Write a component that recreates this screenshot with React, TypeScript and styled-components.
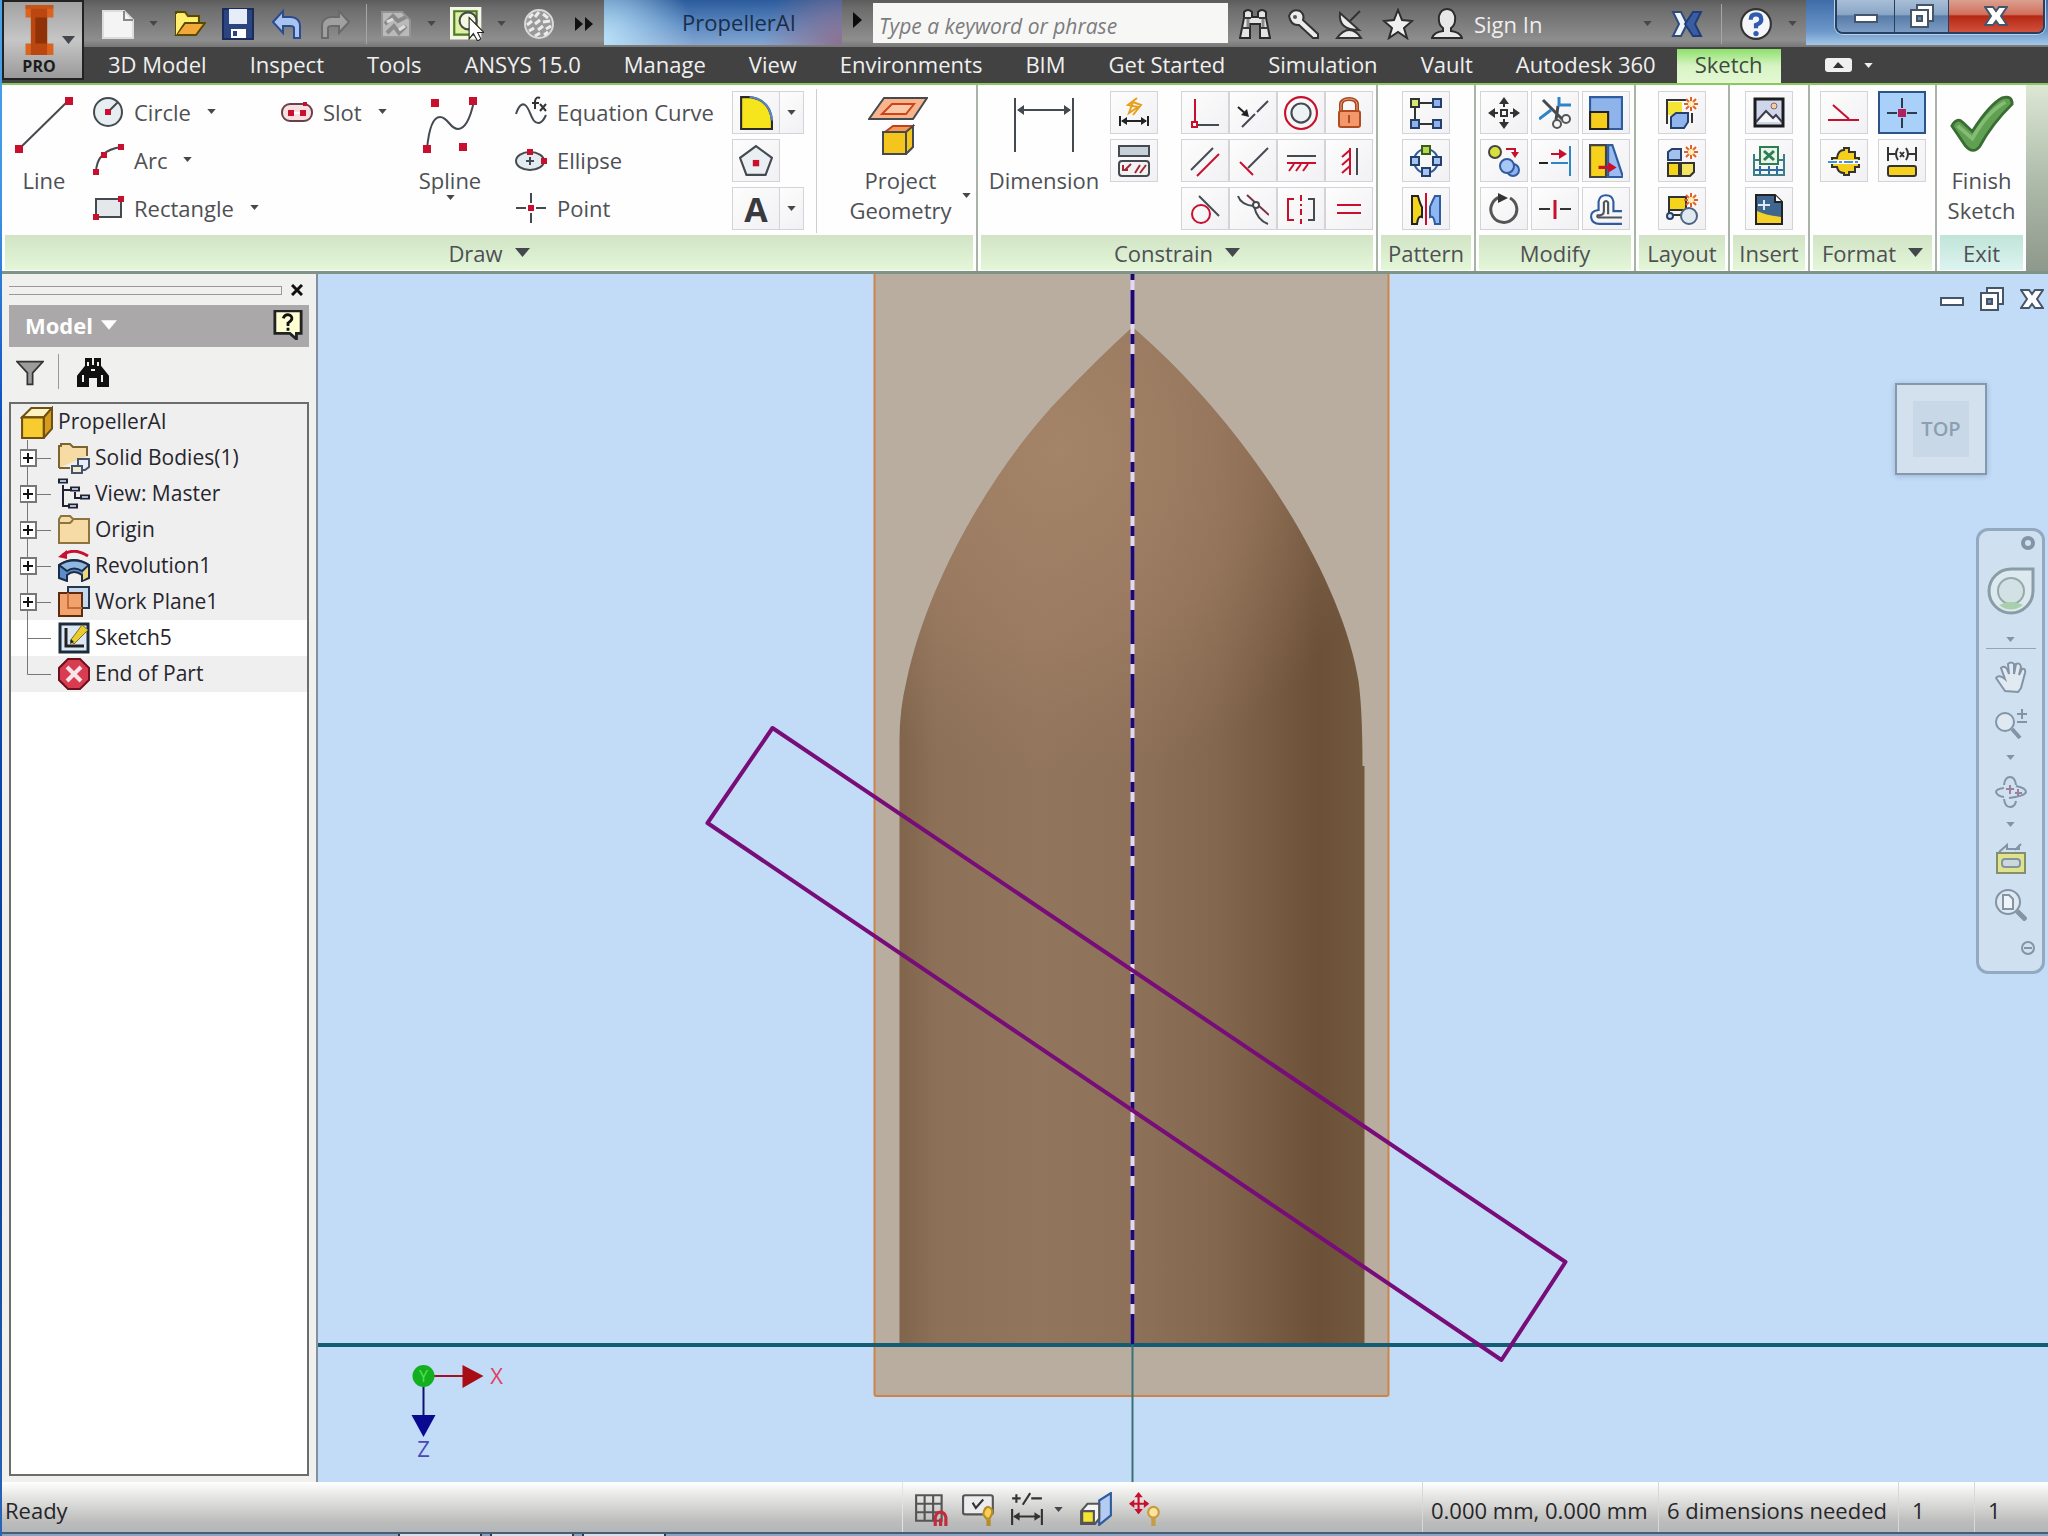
import React from "react";
import styled, { createGlobalStyle, css } from "styled-components";

const RED = "#c8102e";
const INK = "#444a50";
const BLUE = "#2f5c9e";

const Global = createGlobalStyle`
  * { box-sizing: border-box; }
  body { margin: 0; background: #c2dcf8; }
  body, button, input {
    font-family: "Open Sans", "Noto Sans", sans-serif;
    font-size: 22px;
    line-height: 30px;
  }
  button {
    margin: 0; padding: 0; border: 0; background: none; color: inherit; cursor: default;
  }
  svg { display: block; flex: none; }
`;

/* ---------- frame ---------- */

const Window = styled.div`
  min-height: 100vh;
  display: grid;
  grid-template-rows: auto auto 1fr auto auto;
  padding-left: 2px;
  background: linear-gradient(#4aa4ea 0, #3f95e4 200px, #0b50c0 420px, #0a3c9c 1100px, #2a66b8);
`;

const Header = styled.header`
  display: grid;
  grid-template-columns: 82px minmax(0, 1fr);
  grid-template-rows: 47px 36px;
  background: #424242;
  border-bottom: 2px solid #8cc860;
`;

const AppButton = styled.button`
  grid-row: 1 / 3;
  display: grid;
  grid-template-columns: 1fr 18px;
  align-items: center;
  margin-bottom: 3px;
  padding: 2px 2px 2px 0;
  border: 2px solid #222;
  background: linear-gradient(#a2a2a2, #c6c6c6 50%, #9a9a9a);
`;

const AppMark = styled.span`
  display: flex;
  flex-direction: column;
  align-items: center;
  padding-left: 12px;
  font-size: 16px;
  line-height: 20px;
  font-weight: 700;
  color: #1c1c1c;
`;

const TitleBar = styled.div`
  display: flex;
  min-width: 0;
  background: linear-gradient(#5c5c5c 0, #6c6c6c 8px, #8e8e8e 40px, #777);
`;

const TitleGroup = styled.div`
  display: flex;
  align-items: center;
`;

const QuickAccess = styled(TitleGroup)`
  width: 520px;
  padding-left: 16px;
`;

const BarButton = styled.button<{ $w: number }>`
  width: ${(p) => p.$w}px;
  height: 40px;
  display: flex;
  align-items: center;
  justify-content: center;
`;

const BarDivider = styled.span<{ $gap: number }>`
  width: 1px;
  height: 40px;
  margin: 0 ${(p) => p.$gap}px;
  background: #a6a6a6;
`;

const DocTitle = styled.h1`
  width: 238px;
  height: 45px;
  margin: 0;
  padding-left: 32px;
  text-align: center;
  font-size: 22px;
  line-height: 44px;
  font-weight: 400;
  color: #1c2c48;
  background:
    radial-gradient(circle at 0 90%, #b8e0f8 0, transparent 90px),
    radial-gradient(circle at 100% 100%, #8c7090 0, transparent 80px),
    linear-gradient(#2c5c9c, #5d8cc4 60%, #86a6d0);
`;

const SearchField = styled.input`
  width: 355px;
  height: 40px;
  margin-top: 3px;
  padding: 6px 6px 0;
  border: 0;
  background: #f7f7f5;
  font-size: 21px;
  font-style: italic;
  color: #333;
  &::placeholder { color: #7c7c80; opacity: 1; }
`;

const SignIn = styled.button`
  color: #eee;
`;

const Spacer = styled.span`
  flex: 1;
`;

const Glass = styled.div`
  width: 242px;
  height: 45px;
  display: flex;
  justify-content: flex-end;
  padding-right: 3px;
  background: linear-gradient(#3f6ca8, #6c98ca 70%, #a4c8e8);
`;

const WindowButtons = styled.div`
  display: grid;
  grid-template-columns: 58px 54px 94px;
  height: 34px;
  border: 2px solid #27405f;
  border-top: 0;
  border-radius: 0 0 8px 8px;
  overflow: hidden;
  box-shadow: 0 0 0 1px #b8d0e8;
`;

const WindowButton = styled.button<{ $close?: boolean }>`
  display: flex;
  align-items: center;
  justify-content: center;
  border-right: ${(p) => (p.$close ? "0" : "1px solid #27405f")};
  background: ${(p) =>
    p.$close
      ? "linear-gradient(#dca090, #d0705c 45%, #b42814 50%, #d2503c)"
      : "linear-gradient(#a8bed6, #8aa6c6 45%, #587ca8 50%, #7c9cc4)"};
`;

const Tabs = styled.nav`
  display: flex;
  padding-left: 2px;
  color: #f0f0f0;
`;

const Tab = styled.button<{ $active?: boolean }>`
  padding: 0 21px 2px 22px;
  white-space: nowrap;
  ${(p) =>
    p.$active &&
    css`
      margin-top: 2px;
      padding: 0 18px 4px;
      color: #3c4c3c;
      background: linear-gradient(#8ee06c, #d8f4c4 50%, #e4f8d4);
    `}
`;

const CollapseGroup = styled.span`
  display: flex;
  align-items: center;
  gap: 12px;
  margin-left: 44px;
`;

/* ---------- ribbon ---------- */

const Ribbon = styled.section`
  display: grid;
  grid-template-columns:
    minmax(0, 976fr) minmax(0, 400fr) minmax(0, 98fr) minmax(0, 160fr) minmax(0, 94fr)
    minmax(0, 80fr) minmax(0, 127fr) minmax(0, 89fr) minmax(0, 22fr);
  color: #4e5054;
  background: #fefefe;
  border-bottom: 3px solid #7f9486;
`;

const PanelBox = styled.section`
  border-right: 2px solid #a9b3a7;
  &:nth-of-type(8) { border-right: 0; }
`;

const RibbonEnd = styled.div`
  background: linear-gradient(#dce8d4, #a8b4a4 60%, #8e988c);
`;

const PanelBody = styled.div<{ $center?: boolean; $gap?: number }>`
  height: 150px;
  display: flex;
  align-items: flex-start;
  justify-content: ${(p) => (p.$center ? "center" : "flex-start")};
  gap: ${(p) => p.$gap ?? 0}px;
  padding-top: 6px;
`;

const PanelLabel = styled.h2<{ $exit?: boolean }>`
  display: flex;
  align-items: center;
  justify-content: center;
  gap: 12px;
  height: 35px;
  margin: 0 3px 1px;
  font-size: 22px;
  font-weight: 400;
  background: ${(p) =>
    p.$exit ? "linear-gradient(#c0e4d8, #dcf4f0)" : "linear-gradient(#d2e4c6, #e4f6d8)"};
`;

const BigButton = styled.button<{ $w: number }>`
  width: ${(p) => p.$w}px;
  display: flex;
  flex-direction: column;
  align-items: center;
  padding-top: 4px;
  line-height: 30px;
  & > svg:first-child { margin-bottom: 10px; }
`;

const BigLabel = styled.span`
  display: flex;
  align-items: center;
  gap: 10px;
  padding-left: 24px;
`;

const Column = styled.div<{ $w?: number }>`
  ${(p) => p.$w && `width: ${p.$w}px;`}
  display: flex;
  flex-direction: column;
  gap: 5px;
  flex: none;
`;

const Gap = styled.span<{ $w: number }>`
  flex: none;
  width: ${(p) => p.$w}px;
`;

const ToolButton = styled.button`
  height: 43px;
  display: flex;
  align-items: center;
  gap: 10px;
  padding: 0 0 2px 6px;
  white-space: nowrap;
  & > svg:last-child:not(:first-child) { margin-left: 6px; }
`;

const SmallButton = styled.button<{ $w?: number; $on?: boolean }>`
  width: ${(p) => p.$w ?? 48}px;
  height: 43px;
  display: flex;
  align-items: center;
  justify-content: center;
  border: ${(p) => (p.$on ? "2px solid #2c5488" : "1px solid #d3d3d8")};
  background: ${(p) => (p.$on ? "#a8d0f8" : "linear-gradient(135deg, #fdfdfd, #f1f1f4)")};
`;

const TextButton = styled(SmallButton)`
  font-size: 34px;
  line-height: 40px;
  font-weight: 700;
  color: #3a3a3e;
`;

const SplitRow = styled.div`
  display: flex;
  & > button + button { border-left: 0; }
`;

const IconGrid = styled.div<{ $cols: number; $gap?: number }>`
  display: grid;
  grid-template-columns: repeat(${(p) => p.$cols}, auto);
  gap: 5px ${(p) => p.$gap ?? 0}px;
`;

const PanelDivider = styled.span`
  width: 1px;
  height: 144px;
  margin: -2px 0 0 12px;
  background: #cfcfcf;
`;

/* ---------- workspace ---------- */

const Workspace = styled.main`
  display: grid;
  grid-template-columns: 316px minmax(0, 1fr);
`;

const Browser = styled.aside`
  display: flex;
  flex-direction: column;
  padding: 6px 7px 6px 7px;
  background: #f0f0ef;
  border-right: 2px solid #8490a0;
`;

const GripRow = styled.div`
  display: flex;
  align-items: center;
  gap: 7px;
  height: 20px;
  margin-bottom: 5px;
  padding-right: 4px;
`;

const Grip = styled.span`
  flex: 1;
  height: 9px;
  border: solid #999;
  border-width: 1px 1px 1px 0;
`;

const BrowserHead = styled.div`
  display: flex;
  align-items: center;
  justify-content: space-between;
  height: 42px;
  padding: 0 6px 2px 16px;
  background: #aaa8a8;
  color: #fff;
`;

const BrowserTitle = styled.button`
  display: flex;
  align-items: center;
  gap: 8px;
  font-weight: 700;
`;

const BrowserTools = styled.div`
  display: flex;
  align-items: center;
  height: 49px;
  margin-bottom: 6px;
  padding-left: 7px;
  gap: 14px;
`;

const ToolDivider = styled.span`
  width: 1px;
  height: 35px;
  background: #999;
  margin-right: 4px;
`;

const Tree = styled.ul`
  flex: 1;
  margin: 0;
  padding: 0;
  list-style: none;
  border: 2px solid #6c6c6c;
  background: #fff;
  font-size: 21px;
  color: #26262c;
`;

const TreeRow = styled.li<{ $edit?: boolean }>`
  display: flex;
  align-items: center;
  height: 36px;
  padding-left: 9px;
  background: ${(p) => (p.$edit ? "#fff" : "#f0eff0")};
`;

const TreeLabel = styled.button`
  font: inherit;
  padding: 0 0 2px 5px;
  white-space: nowrap;
`;

const Viewport = styled.section`
  position: relative;
  overflow: hidden;
  background: #c2dcf8;
`;

const Scene = styled.svg`
  position: absolute;
  inset: 0;
  width: 100%;
  height: 100%;
`;

const DocButtons = styled.div`
  position: absolute;
  top: 13px;
  right: 4px;
  display: flex;
  gap: 16px;
  align-items: center;
`;

const ViewCube = styled.button`
  position: absolute;
  top: 109px;
  right: 61px;
  width: 92px;
  height: 92px;
  display: flex;
  align-items: center;
  justify-content: center;
  border: 2px solid #8698ac;
  background: #d3e1ee;
  box-shadow: 0 1px 6px #9ab4d0;
`;

const CubeFace = styled.span`
  width: 56px;
  height: 56px;
  line-height: 56px;
  font-size: 20px;
  font-weight: 600;
  color: #8c9fb2;
  background: #c8d8e6;
`;

const NavBar = styled.div`
  position: absolute;
  top: 254px;
  right: 3px;
  width: 69px;
  height: 446px;
  display: flex;
  flex-direction: column;
  align-items: center;
  padding: 4px 0;
  border: 3px solid #93a9c0;
  border-radius: 12px;
  background: #cfe1f1;
`;

const NavButton = styled.button<{ $h: number; $end?: boolean }>`
  width: 100%;
  height: ${(p) => p.$h}px;
  display: flex;
  align-items: center;
  justify-content: ${(p) => (p.$end ? "flex-end" : "center")};
  padding-right: ${(p) => (p.$end ? 6 : 0)}px;
`;

const NavDivider = styled.span`
  width: 50px;
  height: 1px;
  background: #93a5b8;
`;

/* ---------- status bar ---------- */

const StatusBar = styled.footer`
  display: grid;
  grid-template-columns: minmax(0, 900fr) minmax(0, 520fr) 236px 240px 76px 74px;
  height: 50px;
  color: #26262a;
  background: linear-gradient(#fff, #e9e9e8 25%, #bcbcbb 80%, #b2b6ba);
`;

const StatusCell = styled.div`
  display: flex;
  align-items: center;
  padding: 6px 0 0 8px;
  white-space: nowrap;
  border-left: 1px solid #d8d8d8;
  &:first-child { padding-left: 3px; border-left: 0; }
  &:nth-child(n + 5) { padding-left: 13px; }
`;

const StatusTools = styled.div`
  display: flex;
  align-items: center;
  padding: 4px 0 0 4px;
  border-left: 1px solid #e4e4e4;
`;

const Taskbar = styled.div`
  display: flex;
  gap: 8px;
  height: 4px;
  padding-left: 396px;
  border-top: 2px solid #4a5c70;
  background: #86a6c8;
`;

const TaskItem = styled.span`
  width: 84px;
  background: #d4e0ec;
  border: solid #2e3a44;
  border-width: 0 2px;
`;

/* ---------- icons ---------- */

type IcoProps = { s?: number; v?: string; children: React.ReactNode };
const Ico = ({ s = 32, v = "0 0 32 32", children }: IcoProps) => (
  <svg width={s} height={s} viewBox={v} fill="none" stroke={INK} strokeWidth="2" aria-hidden="true">
    {children}
  </svg>
);

const Caret = ({ color = "#44484c", w = 9 }: { color?: string; w?: number }) => (
  <svg width={w} height={Math.round(w * 0.6)} viewBox="0 0 10 6" aria-hidden="true">
    <path d="M0 0H10L5 6Z" fill={color} />
  </svg>
);

const Dot = ({ x, y, r = 3 }: { x: number; y: number; r?: number }) => (
  <rect x={x - r} y={y - r} width={r * 2} height={r * 2} fill={RED} stroke="none" />
);

const Spark = ({ x = 25, y = 7 }: { x?: number; y?: number }) => (
  <g stroke="#e0622a" strokeWidth="2">
    <path d={`M${x} ${y - 7}V${y + 7}M${x - 7} ${y}H${x + 7}M${x - 5} ${y - 5}L${x + 5} ${y + 5}M${x + 5} ${y - 5}L${x - 5} ${y + 5}`} />
    <circle cx={x} cy={y} r="3" fill="#fff0b0" stroke="none" />
  </g>
);

const icons = {
  logo: (
    <svg width="36" height="52" viewBox="0 0 40 54" preserveAspectRatio="none" aria-hidden="true">
      <path d="M5 1H36V14H29V41H36V53H5V41H11V14H5Z" fill="#d9641f" />
      <path d="M11 1H29V53H11Z" fill="#b9470f" />
      <path d="M16 14H29V41H16Z" fill="#8f3208" />
      <path d="M5 1H36V5H5Z" fill="#c4561c" />
    </svg>
  ),
  newDoc: (
    <Ico><path d="M1 3H22L31 12V30H1Z" fill="#f4f4f4" stroke="#ddd" /><path d="M22 3V12H31" stroke="#888" /></Ico>
  ),
  open: (
    <Ico>
      <path d="M2 27V4H11L14 8H25V14" fill="#fbe36a" stroke="#5a4a00" />
      <path d="M2 27L11 15H31L22 27Z" fill="#f2a93a" stroke="#5a4a00" />
      <path d="M2 27V6H10L13 10H23V14H10Z" fill="#ffef6e" stroke="none" />
    </Ico>
  ),
  save: (
    <Ico>
      <path d="M1 1H31V31H1Z" fill="#2c4480" stroke="#1b2c5c" />
      <path d="M7 1H25V16H7Z" fill="#e6ecf8" stroke="none" />
      <path d="M9 21H24V30H9Z" fill="#fff" stroke="none" />
      <path d="M11 23H15V28H11Z" fill="#2c4480" stroke="none" />
    </Ico>
  ),
  undo: (
    <Ico>
      <path d="M2 14L12 3V9H20Q29 10 29 18V30H23V20Q23 18 19 18H12V25Z" fill="#a9c4ee" stroke="#2c4c90" />
    </Ico>
  ),
  redo: (
    <Ico><path d="M30 14L20 3V9H12Q3 10 3 18V30H9V20Q9 18 13 18H20V25Z" fill="#a0a0a0" stroke="#6a6a6a" /></Ico>
  ),
  update: (
    <Ico>
      <path d="M2 4H22L30 12V29H2Z" fill="#bababa" stroke="#949494" />
      <path d="M5 16L13 8L18 13L26 9M7 25L14 18L19 25L26 18" stroke="#8a8a8a" strokeWidth="4" />
      <path d="M7 14L13 11M19 22L25 18" stroke="#dedede" strokeWidth="3" />
    </Ico>
  ),
  select: (
    <Ico s={34}>
      <path d="M1 1H28V29H1Z" fill="#dff0a0" stroke="#f6f6e8" strokeWidth="3" />
      <path d="M4 4H25V26H4Z" stroke="#4d7a2c" />
      <circle cx="17" cy="13" r="8" fill="#f4f8e0" />
      <path d="M18 10V30L22 25L26 32L29 30L26 24H32Z" fill="#fff" stroke="#222" strokeWidth="1" />
    </Ico>
  ),
  sphere: (
    <Ico>
      <circle cx="16" cy="16" r="14" fill="#9a9a9a" stroke="#d8d8d8" />
      <path d="M6 10L10 6M12 9L16 4M20 6L25 10M4 17L9 13M12 16L17 12M20 14L27 13M6 23L11 20M15 22L20 18M23 21L28 18M12 28L17 25M21 27L25 24" stroke="#ececec" strokeWidth="3" />
    </Ico>
  ),
  more: (
    <svg width="18" height="14" viewBox="0 0 18 14" aria-hidden="true"><path d="M0 0L8 7L0 14ZM10 0L18 7L10 14Z" fill="#111" /></svg>
  ),
  arrow: (
    <svg width="9" height="16" viewBox="0 0 9 16" aria-hidden="true"><path d="M0 0L9 8L0 16Z" fill="#0c0c0c" /></svg>
  ),
  binoculars: (
    <Ico>
      <path d="M5 4Q9 0 13 4V9H19V4Q23 0 27 4V10L31 30H21V16H11V30H1L5 10Z" fill="#e4e4e4" stroke="#2a2a2a" />
      <path d="M5 10H12M20 10H27M2 20H11M21 20H30" stroke="#3a3a3a" /><path d="M9 11V19M24 11V19" stroke="#8a8a8a" strokeWidth="3" />
    </Ico>
  ),
  key: (
    <Ico>
      <path d="M2 8Q5 0 13 3Q18 7 16 12L31 26V30H26L12 17Q4 18 2 8Z" fill="#ececec" stroke="#333" />
      <circle cx="8" cy="9" r="2" fill="#555" stroke="none" />
    </Ico>
  ),
  dish: (
    <Ico>
      <path d="M6 5Q4 22 25 22Z" fill="#ececec" stroke="#333" />
      <path d="M16 13L26 3M3 30Q9 22 15 22Q22 22 27 30Z" fill="#ececec" stroke="#333" />
    </Ico>
  ),
  star: (
    <Ico><path d="M16 2L20 12L30 13L22 20L25 30L16 24L7 30L10 20L2 13L12 12Z" fill="#f0f0f0" stroke="#2c2c2c" /></Ico>
  ),
  user: (
    <Ico>
      <path d="M1 30Q3 24 12 23V20Q7 17 8 8Q10 1 16 1Q22 1 24 8Q25 17 20 20V23Q29 24 31 30Z" fill="#e8e8e8" stroke="#2c2c2c" />
    </Ico>
  ),
  exchange: (
    <Ico>
      <path d="M2 4H10L16 16L10 28H2L8 16Z" fill="#eef4fa" stroke="#2c4c7c" />
      <path d="M30 4H22L14 16L22 28H30L24 16Z" fill="#3a5ca0" stroke="#1f3d78" />
    </Ico>
  ),
  help: (
    <Ico s={34}>
      <circle cx="16" cy="16" r="14" fill="#f4f6fa" stroke="#333" />
      <path d="M11 12Q11 7 16 7Q21 7 21 12Q21 15 16 17V20" stroke="#2f5cae" strokeWidth="4" />
      <circle cx="16" cy="25" r="2" fill="#2f5cae" stroke="#2f5cae" strokeWidth="1" />
    </Ico>
  ),
  minimize: (
    <Ico s={24} v="0 0 24 24"><path d="M1 11H23V18H1Z" fill="#fff" stroke="#46566a" /></Ico>
  ),
  restore: (
    <Ico s={24} v="0 0 24 24">
      <path d="M7 1H23V17H18V6H7Z" fill="#fff" stroke="#46566a" />
      <path d="M1 6H18V23H1Z" fill="#fff" stroke="#46566a" />
      <path d="M7 12H12V17H7Z" fill="#6a88ac" stroke="#46566a" />
    </Ico>
  ),
  close: (
    <Ico s={24} v="0 0 24 24">
      <path d="M1 3H9L12 7L15 3H23L17 12L23 21H15L12 17L9 21H1L7 12Z" fill="#fff" stroke="#46566a" />
    </Ico>
  ),
  line: (
    <Ico s={60} v="0 0 60 60"><path d="M5 54L55 5" /><Dot x={5} y={54} r={4} /><Dot x={55} y={6} r={4} /></Ico>
  ),
  circle: (
    <Ico><circle cx="16" cy="16" r="14" fill="#e6eef2" /><path d="M16 16L26 6" /><Dot x={16} y={16} /></Ico>
  ),
  arc: (
    <Ico><path d="M4 29Q4 6 30 3" /><Dot x={4} y={28} /><Dot x={12} y={11} /><Dot x={29} y={3} /></Ico>
  ),
  rect: (
    <Ico><path d="M4 7H29V25H4Z" fill="#e4e8ea" /><Dot x={4} y={25} /><Dot x={29} y={7} /></Ico>
  ),
  slot: (
    <Ico>
      <rect x="1" y="8" width="30" height="17" rx="8" fill="#f7dfe2" stroke="#6c4048" />
      <path d="M10 17H22" stroke="#fff" /><Dot x={10} y={17} /><Dot x={22} y={17} /><Dot x={24} y={8} r={2} />
    </Ico>
  ),
  spline: (
    <Ico s={60} v="0 0 60 60">
      <path d="M7 54Q10 22 20 22C28 22 30 34 38 34Q48 34 54 6" /><Dot x={7} y={54} r={4} />
      <Dot x={15} y={8} r={4} /><Dot x={43} y={52} r={4} /><Dot x={53} y={6} r={4} />
    </Ico>
  ),
  curve: (
    <Ico>
      <path d="M1 18Q5 6 10 9C16 13 16 28 24 27Q28 26 31 19" />
      <path d="M25 2Q21 0 20 5V13M17 7H24M25 8L31 15M31 8L25 15" stroke="#333" />
    </Ico>
  ),
  ellipse: (
    <Ico>
      <ellipse cx="15" cy="17" rx="14" ry="9" fill="#e2ebf0" /><path d="M15 13V21M11 17H19" />
      <Dot x={15} y={8} /><Dot x={29} y={17} />
    </Ico>
  ),
  point: (
    <Ico><path d="M16 1V11M16 21V31M1 16H11M21 16H31" /><Dot x={16} y={16} /></Ico>
  ),
  fillet: (
    <Ico s={34}>
      <path d="M2 31V1H10Q30 4 31 24V31Z" fill="#f6e41c" stroke="#2a2a2a" />
      <path d="M10 1Q29 3 31 23" stroke="#5a86c4" />
    </Ico>
  ),
  polygon: (
    <Ico s={34}><path d="M16 2L31 13L25 29H7L1 13Z" fill="#e9eff2" /><Dot x={16} y={18} /></Ico>
  ),
  project: (
    <Ico s={60} v="0 0 60 60">
      <path d="M16 3H59L45 24H1Z" fill="#f7b58e" />
      <path d="M24 9H46L38 19H14Z" fill="#f9c9a8" stroke="#d0421c" />
      <path d="M17 37L25 31H45L39 37Z" fill="#f39a58" stroke="#c0421c" />
      <path d="M15 37H38V59H15ZM38 37L45 31V52L38 59" fill="#f4c51c" />
    </Ico>
  ),
  dimension: (
    <Ico s={60} v="0 0 60 60">
      <path d="M1 3V57M59 3V57M4 15H56" /><path d="M3 15L10 10V20ZM57 15L50 10V20Z" fill={INK} stroke="none" />
    </Ico>
  ),
  autoDim: (
    <Ico>
      <path d="M19 1L10 8L20 10L11 16L15 5L23 8L15 18" stroke="#e8a01c" />
      <path d="M2 19V29M30 19V29M4 24H28" stroke="#222" /><path d="M3 24L9 20V28ZM29 24L23 20V28Z" fill="#222" stroke="none" />
    </Ico>
  ),
  showCon: (
    <Ico>
      <path d="M1 1H31V11H1Z" fill="#c6d0d8" /><rect x="1" y="16" width="30" height="15" rx="3" fill="#f2f2f2" />
      <path d="M5 20V25H10M13 19L7 25M17 28L22 20M22 28L28 20" stroke="#a02838" />
    </Ico>
  ),
  perp: (
    <Ico><path d="M6 2V26" stroke={RED} /><path d="M9 28H30" /><path d="M3 25H8V30H3Z" fill="#fff" stroke={RED} /></Ico>
  ),
  coincident: (
    <Ico><path d="M5 30L18 17M20 15L31 4" /><path d="M1 10L10 18" stroke="#222" /><path d="M12 20L4 18L10 12Z" fill="#222" stroke="none" /></Ico>
  ),
  concentric: (
    <Ico s={34}><circle cx="16" cy="16" r="15" stroke={RED} /><circle cx="16" cy="16" r="9" fill="#edf3f5" /></Ico>
  ),
  lock: (
    <Ico>
      <path d="M8 14V7Q9 2 16 2Q23 2 24 7V14" stroke="#a8481c" strokeWidth="4" />
      <path d="M8 14V7Q9 2 16 2Q23 2 24 7V14" stroke="#f2a884" strokeWidth="1" />
      <rect x="6" y="14" width="21" height="16" rx="2" fill="#f2986a" stroke="#b04c20" /><path d="M16 18V26" stroke="#b04c20" />
    </Ico>
  ),
  parallel: (
    <Ico><path d="M2 25L24 3" /><path d="M8 31L30 9" stroke={RED} /></Ico>
  ),
  tangentLine: (
    <Ico><path d="M11 23L31 3" /><path d="M3 17L16 30" stroke={RED} /></Ico>
  ),
  horizontal: (
    <Ico>
      <path d="M2 11H31" /><path d="M2 18H31M4 26L9 19M11 26L16 19M18 26L23 19" stroke={RED} />
    </Ico>
  ),
  vertical: (
    <Ico><path d="M24 3V30" /><path d="M17 3V30M17 5L9 12M17 13L9 20M17 21L9 28" stroke={RED} /></Ico>
  ),
  tangent: (
    <Ico><circle cx="12" cy="21" r="9" stroke={RED} /><path d="M10 3L30 23" /></Ico>
  ),
  smooth: (
    <Ico>
      <path d="M1 3Q4 12 17 13Q20 27 31 31" /><path d="M10 2L32 22" stroke="#7c3040" /><circle cx="19" cy="12" r="3" fill="#fff" />
    </Ico>
  ),
  symmetric: (
    <Ico>
      <path d="M9 6H3V27H9" stroke={RED} /><path d="M16 2V8M16 11V13M16 16V22M16 26V31" stroke={RED} /><path d="M23 6H29V27H23" />
    </Ico>
  ),
  equal: (<Ico><path d="M4 12H28M4 20H28" stroke={RED} /></Ico>),
  rectPattern: (
    <Ico>
      <path d="M10 6H22M5 10V22M10 27H22" stroke="#333" /><path d="M1 2H9V10H1Z" fill="#d4e878" stroke="#333" />
      <path d="M23 2H31V10H23ZM1 23H9V31H1ZM23 23H31V31H23Z" fill="#8fb2ee" stroke="#26406c" />
    </Ico>
  ),
  circPattern: (
    <Ico>
      <circle cx="16" cy="16" r="12" stroke={BLUE} /><path d="M12 1H20V9H12Z" fill="#b6d850" stroke="#3c5c1c" />
      <path d="M1 12H9V20H1ZM23 12H31V20H23ZM12 23H20V31H12Z" fill="#a4c4f4" stroke="#26406c" />
    </Ico>
  ),
  mirror: (
    <Ico>
      <path d="M2 3H8Q10 11 12 14V24Q8 22 7 31H2Z" fill="#f4d51c" stroke="#222" /><path d="M16 0V32" stroke={RED} />
      <path d="M30 3H25Q21 11 20 14V24Q24 22 25 31H30Z" fill="#8fb8f2" stroke={BLUE} />
    </Ico>
  ),
  move: (
    <Ico>
      <path d="M13 13H19V19H13ZM16 5V10M16 22V27M5 16H10M22 16H27" stroke="#333" />
      <path d="M16 0L21 7H11ZM16 32L21 25H11ZM0 16L7 11V21ZM32 16L25 11V21Z" fill="#333" stroke="none" />
    </Ico>
  ),
  trim: (
    <Ico>
      <path d="M0 22L12 13M20 0V9M20 8H32" stroke="#2d84c8" strokeWidth="3" /><path d="M4 3L23 22M19 9L17 23" strokeWidth="3" />
      <circle cx="18" cy="27" r="4" stroke="#555" /><circle cx="27" cy="22" r="4" stroke="#555" />
    </Ico>
  ),
  scale: (
    <Ico s={34}>
      <path d="M1 1H31V31H1Z" fill="#8fb4ec" stroke={BLUE} /><path d="M1 15H18V31H1Z" fill="#f6cd1c" stroke="#222" strokeWidth="2" />
    </Ico>
  ),
  copy: (
    <Ico>
      <circle cx="7" cy="7" r="6" fill="#d8e03c" stroke="#444" /><circle cx="25" cy="25" r="6" fill="#8fb2ee" stroke={BLUE} />
      <circle cx="19" cy="21" r="7" fill="#a8c6f6" stroke={BLUE} /><path d="M18 4H27V10" stroke={RED} /><path d="M27 13L23 7H31Z" fill={RED} stroke="none" />
    </Ico>
  ),
  extend: (
    <Ico>
      <path d="M31 1V31M12 18H29" stroke="#2d84c8" /><path d="M0 18H9" stroke="#222" /><path d="M12 9H22" stroke={RED} /><path d="M28 9L20 4V14Z" fill={RED} stroke="none" />
    </Ico>
  ),
  stretch: (
    <Ico s={34}>
      <path d="M18 1H22L32 31H18Z" fill="#9abcf0" stroke={BLUE} /><path d="M1 1H16V31H1Z" fill="#f6d21c" stroke="#444" />
      <path d="M9 22H20" stroke={RED} strokeWidth="3" /><path d="M26 22L18 17V27Z" fill={RED} stroke="none" />
    </Ico>
  ),
  rotate: (
    <Ico><path d="M22 5A13 13 0 1 1 12 4" stroke="#555" strokeWidth="3" /><path d="M20 5L10 0V10Z" fill="#333" stroke="none" /></Ico>
  ),
  split: (
    <Ico><path d="M0 16H11M21 16H32" stroke="#333" /><path d="M16 7V26" stroke={RED} strokeWidth="3" /></Ico>
  ),
  offset: (
    <Ico s={34}>
      <path d="M31 18H23V9Q22 3 16 3Q10 3 9 9V17Q1 18 2 24Q3 30 10 30H31" stroke={BLUE} />
      <path d="M31 24H10Q7 24 8 22Q14 22 14 18V10Q16 7 18 10V21" stroke="#4c545c" />
    </Ico>
  ),
  layout1: (
    <Ico>
      <path d="M1 27V3H20M26 16V26" stroke="#333" /><path d="M2 5H16V18H2Z" fill="#f4e434" stroke="none" />
      <path d="M5 20L10 16H22V25L18 31H5Z" fill="#8fb4ee" stroke="#26406c" /><Spark />
    </Ico>
  ),
  layout2: (
    <Ico>
      <path d="M2 7L6 4H15V15H2Z" fill="#a4c0ee" stroke="#26406c" /><path d="M2 18H13V31H2Z" fill="#f4d51c" stroke="#333" />
      <path d="M15 18H28V27L24 31H15Z" fill="#f4e464" stroke="#333" /><Spark />
    </Ico>
  ),
  layout3: (
    <Ico>
      <path d="M3 4H20V17H3Z" fill="#f4d51c" stroke="#333" /><path d="M3 18V22H16" stroke="#333" /><circle cx="4" cy="23" r="3" fill="#dbe6f4" stroke="#26406c" />
      <circle cx="23" cy="23" r="8" fill="#dfe9f2" stroke="#4c6480" /><Spark />
    </Ico>
  ),
  image: (
    <Ico>
      <path d="M2 2H30V29H2Z" fill="#cfd6ec" stroke="#1c1c1c" strokeWidth="3" /><path d="M3 25L13 14L20 21L23 18L29 25" fill="#f6f6f6" stroke="#3c3c4c" />
      <circle cx="21" cy="9" r="3" fill="#f6cc9c" stroke="#866" strokeWidth="1" />
    </Ico>
  ),
  points: (
    <Ico>
      <path d="M1 9V30H31V9M1 15H7M25 15H31" stroke="#3f7c84" /><path d="M7 2H25V19H7Z" fill="#e8f4ea" stroke="#2c7c54" />
      <path d="M11 6L21 15M21 6L11 15" stroke="#2c7c54" strokeWidth="3" /><path d="M2 25H30M7 21V29M16 21V29M24 21V29" stroke="#2c6ca8" />
    </Ico>
  ),
  acad: (
    <Ico>
      <path d="M3 2H22L29 9V31H3Z" fill="#3f668e" stroke="#222" /><path d="M4 18Q12 22 28 24V30H4Z" fill="#f4d028" stroke="none" />
      <path d="M22 2V9H29" fill="#fff" stroke="#222" /><path d="M5 12H17M11 7V17" stroke="#dfe9f2" />
    </Ico>
  ),
  construction: (
    <Ico><path d="M0 23H31M5 8L21 22" stroke={RED} /></Ico>
  ),
  centerPoint: (
    <Ico><path d="M16 1V11M16 21V31M1 16H11M21 16H31" stroke="#2c3c50" /><rect x="12" y="12" width="8" height="8" fill="#b0205c" stroke="none" /></Ico>
  ),
  centerline: (
    <Ico>
      <path d="M4 13H9Q10 5 16 5V3H21V7H27V13H31V22H27V27H21V30H16V28Q10 28 9 22H4Z" fill="#f4d01c" stroke="#333" /><path d="M0 17H32" stroke="#fff" strokeWidth="4" /><path d="M0 17H32" stroke="#3f94d8" strokeDasharray="9 2 3 2" />
    </Ico>
  ),
  driven: (
    <Ico>
      <path d="M2 2V16M30 2V16M2 9H9M23 9H30M12 3Q8 9 12 15M20 3Q24 9 20 15M14 7L18 12M18 7L14 12" stroke="#333" />
      <rect x="2" y="21" width="28" height="10" rx="2" fill="#f6d01c" stroke="#333" />
    </Ico>
  ),
  check: (
    <svg width="66" height="60" viewBox="0 0 68 66" preserveAspectRatio="none" aria-hidden="true">
      <path d="M3 34Q8 24 14 30L24 40Q42 10 55 3Q65 0 65 10Q44 32 32 56Q25 66 17 56Z" fill="#5fa052" stroke="#3a6c34" strokeWidth="3" />
      <path d="M9 34L24 48Q40 18 58 8" fill="none" stroke="#84bc74" strokeWidth="4" />
    </svg>
  ),
  noteHelp: (
    <Ico s={30}>
      <path d="M2 1H30V25H25V31L18 25H2Z" fill="#ffffd4" stroke="#222" strokeWidth="3" />
      <path d="M11 9Q12 5 16 5Q21 6 20 10Q19 12 16 14V17M16 19V22" stroke="#111" strokeWidth="3" />
    </Ico>
  ),
  filter: (
    <Ico s={28}><path d="M1 4H31L19 17V30H13V17Z" fill="#9c9c9c" stroke="#333" strokeWidth="2" /></Ico>
  ),
  find: (
    <Ico s={32}>
      <path d="M9 3H14V10H18V3H23V10L31 20V30H21V21H11V30H1V20L9 10Z" fill="#111" stroke="#111" /><path d="M6 19V26M14 14H18M25 19V26M11 6V10M21 6V10" stroke="#f2f2f2" />
    </Ico>
  ),
  part: (
    <Ico s={33}>
      <path d="M2 11L11 2H31L23 11Z" fill="#fdf2c0" stroke="#705010" /><path d="M23 11L31 2V22L23 31Z" fill="#d89c1c" stroke="#705010" />
      <path d="M2 11H23V31H2Z" fill="#f8cc30" stroke="#705010" />
    </Ico>
  ),
  bodies: (
    <Ico>
      <path d="M1 26V4H3V2H12L15 5H29V14M1 26H12" fill="#f6dca4" stroke="#7c6430" />
      <path d="M20 17H31V25L27 28H20Z" fill="#e8eef8" stroke="#46546c" /><path d="M14 24H24V31H14Z" fill="#f4ecd0" stroke="#46546c" />
    </Ico>
  ),
  view: (
    <Ico>
      <path d="M5 7V28H10M5 12H12M17 14V20H24" stroke="#223" /><path d="M0 3H10M12 11H22M10 28H20M22 19H32" stroke="#223" strokeWidth="5" />
      <path d="M2 3H8M14 11H20M12 28H18M24 19H30" stroke="#a8bcd4" strokeWidth="2" />
    </Ico>
  ),
  folder: (
    <Ico><path d="M1 29V5L3 2H12L15 5H31V29Z" fill="#f6dca4" stroke="#8c7440" /><path d="M2 9H12L15 6" stroke="#8c7440" /></Ico>
  ),
  revolve: (
    <Ico>
      <path d="M1 15Q16 5 31 15V28L24 31V25Q16 19 9 25V31L1 28Z" fill="#5c8ccc" stroke="#1c2c44" />
      <path d="M1 15Q16 6 31 15L24 21Q16 16 9 21Z" fill="#8fb8e0" stroke="#1c2c44" /><path d="M25 22L30 17V27L25 30Z" fill="#f0d878" stroke="none" />
      <path d="M30 6Q16 -3 5 5" stroke={RED} strokeWidth="3" /><path d="M0 7L9 0V9Z" fill={RED} stroke="none" />
    </Ico>
  ),
  plane: (
    <Ico><path d="M10 1H31V22H10Z" fill="#c6d8ee" stroke="#26364c" /><path d="M1 7H24V30H1Z" fill="#f2a26c" stroke="#5c2c10" /><path d="M10 7V22H24" stroke="#c86c38" /></Ico>
  ),
  sketch: (
    <Ico>
      <path d="M2 2H30V30H2Z" fill="#dce8f4" stroke="#1c2c3c" strokeWidth="3" /><path d="M8 6V24H26" stroke="#222" strokeWidth="3" />
      <path d="M12 19L24 3L30 8L16 22Z" fill="#e8cc30" stroke="#7c7020" strokeWidth="1" /><path d="M12 22L13 17L16 20Z" fill="#222" stroke="none" />
    </Ico>
  ),
  end: (
    <Ico><path d="M10 1H22L31 10V22L22 31H10L1 22V10Z" fill="#d83c50" stroke="#6c1020" /><path d="M9 9L23 23M23 9L9 23" stroke="#fbe4e8" strokeWidth="4" /></Ico>
  ),
  snap: (
    <Ico s={34}>
      <path d="M2 3H26V27H2ZM10 3V27M18 3V27M2 11H26M2 19H26" stroke="#555" />
      <path d="M20 32V24Q21 19 25 19Q29 19 30 24V32M25 32V25" stroke="#c42c3c" strokeWidth="3" />
    </Ico>
  ),
  inferred: (
    <Ico s={34}>
      <rect x="1" y="3" width="28" height="18" rx="2" fill="#ececee" stroke="#555" /><path d="M10 10L13 15L20 7" stroke="#333" />
      <path d="M20 21Q21 14 25 14Q30 16 28 21L26 25H23Z" fill="#f8d054" stroke="#b88c28" /><path d="M25 26V32" stroke="#b88c28" strokeWidth="4" />
    </Ico>
  ),
  tolerance: (
    <Ico s={34}>
      <path d="M2 6H10M6 2V10M12 12L19 1M20 6H30M2 16V31M30 16V31M4 23H28" stroke="#333" /><path d="M3 23L9 19V27ZM29 23L23 19V27Z" fill="#333" stroke="none" />
    </Ico>
  ),
  slice: (
    <Ico s={34}>
      <path d="M19 8L30 1V22L19 31Z" fill="#b4ccf2" stroke={BLUE} /><path d="M2 18L8 11H19V25L15 30H2Z" fill="#f4f4f4" stroke="#555" /><path d="M3 18H14V29H3Z" fill="#f4e434" stroke="#555" />
    </Ico>
  ),
  relax: (
    <Ico s={34}>
      <path d="M9 2V20M1 11H18" stroke={RED} /><path d="M9 0L13 5H5ZM9 21L13 16H5ZM0 11L5 7V15ZM19 11L14 7V15Z" fill={RED} stroke="none" />
      <circle cx="23" cy="19" r="5" fill="#fbe49c" stroke="#c89c40" /><path d="M23 24V32" stroke="#c89c40" strokeWidth="4" />
    </Ico>
  ),
};

const NAV = "#8294a6";
const nav = {
  gear: (
    <Ico s={16} v="0 0 16 16"><circle cx="8" cy="8" r="5" stroke={NAV} strokeWidth="4" /></Ico>
  ),
  wheel: (
    <Ico s={48} v="0 0 48 48">
      <path d="M24 2H46V24A22 22 0 1 1 24 2Z" fill="#dce9ee" stroke="#8a9ca4" strokeWidth="3" />
      <circle cx="24" cy="24" r="13" fill="#d2e2e4" stroke="#97a9aa" /><path d="M12 38Q24 32 36 38Q24 47 12 38Z" fill="#a8d0ac" stroke="none" />
    </Ico>
  ),
  hand: (
    <Ico>
      <path d="M10 30L1 17Q4 13 10 18L6 7Q9 4 12 8L14 13L13 3Q16 0 19 3V13L21 3Q25 1 26 6L24 14L27 8Q31 7 30 12L26 27L23 31Z" fill="#e2eaf1" stroke={NAV} />
    </Ico>
  ),
  zoom: (
    <Ico><circle cx="10" cy="13" r="9" fill="#dfe9f2" stroke={NAV} /><path d="M17 20L25 29" stroke={NAV} strokeWidth="4" /><path d="M27 0V10M22 5H32M22 13H32" stroke={NAV} /></Ico>
  ),
  orbit: (
    <Ico>
      <path d="M9 9Q10 1 15 1Q20 1 21 9M9 23Q10 31 15 31Q20 31 21 25M9 12Q1 13 1 16Q2 20 9 21M21 10Q31 12 31 16Q30 20 14 22" stroke={NAV} />
      <path d="M15 9V18M11 13H19M20 17H27M23 13V20" stroke="#a08098" />
    </Ico>
  ),
  look: (
    <Ico>
      <path d="M2 11H30V31H2Z" fill="#dfe48c" stroke="#84906c" /><rect x="7" y="17" width="18" height="8" rx="3" fill="#ccd8dc" stroke={NAV} />
      <path d="M4 10L12 3V7H24V3M20 8L26 2" stroke={NAV} />
    </Ico>
  ),
  page: (
    <Ico><circle cx="13" cy="13" r="12" fill="#dfe9f2" stroke={NAV} /><path d="M8 6H14L18 10V20H8Z" fill="#eef4f8" stroke={NAV} /><path d="M22 22L31 31" stroke={NAV} strokeWidth="5" /></Ico>
  ),
  less: (
    <Ico s={16} v="0 0 16 16"><circle cx="8" cy="8" r="6" stroke={NAV} /><path d="M4 8H12" stroke={NAV} /></Ico>
  ),
};

/* ---------- parts ---------- */

type IconName = keyof typeof icons;

const Panel = ({ label, caret, center, gap, exit, children }: {
  label: string; caret?: boolean; center?: boolean; gap?: number; exit?: boolean; children: React.ReactNode;
}) => (
  <PanelBox aria-label={label}>
    <PanelBody $center={center} $gap={gap}>{children}</PanelBody>
    <PanelLabel $exit={exit}>{label}{caret && <Caret w={15} />}</PanelLabel>
  </PanelBox>
);

const Small = ({ icon, on }: { icon: IconName; on?: boolean }) => (
  <SmallButton type="button" aria-label={icon} aria-pressed={on} $on={on}>{icons[icon]}</SmallButton>
);

const Tool = ({ icon, label, menu }: { icon: IconName; label: string; menu?: boolean }) => (
  <ToolButton type="button">{icons[icon]}{label}{menu && <Caret />}</ToolButton>
);

const Bar = ({ icon, w }: { icon: IconName; w: number }) => (
  <BarButton type="button" aria-label={icon} $w={w}>{icons[icon]}</BarButton>
);

const BarMenu = ({ w }: { w: number }) => (
  <BarButton type="button" aria-label="menu" $w={w}><Caret /></BarButton>
);

const Branch = ({ expand, last }: { expand: boolean; last: boolean }) => (
  <svg width="38" height="36" viewBox="0 0 38 36" fill="none" stroke="#777" strokeWidth="1" aria-hidden="true">
    <path d={last ? "M7.5 0V18.5H31" : "M7.5 0V36M7.5 18.5H31"} />
    {expand && (
      <>
        <rect x="0" y="10" width="16" height="16" fill="#fff" strokeWidth="2" />
        <path d="M3 18H13M8 13V23" stroke="#111" strokeWidth="2" />
      </>
    )}
  </svg>
);

const tabs = ["3D Model", "Inspect", "Tools", "ANSYS 15.0", "Manage", "View", "Environments", "BIM",
  "Get Started", "Simulation", "Vault", "Autodesk 360"];

const nodes: { icon: IconName; label: string; expand: boolean }[] = [
  { icon: "bodies", label: "Solid Bodies(1)", expand: true },
  { icon: "view", label: "View: Master", expand: true },
  { icon: "folder", label: "Origin", expand: true },
  { icon: "revolve", label: "Revolution1", expand: true },
  { icon: "plane", label: "Work Plane1", expand: true },
  { icon: "sketch", label: "Sketch5", expand: false },
  { icon: "end", label: "End of Part", expand: false },
];

const constraints: IconName[] = ["perp", "coincident", "concentric", "lock", "parallel", "tangentLine",
  "horizontal", "vertical", "tangent", "smooth", "symmetric", "equal"];
const modify: IconName[] = ["move", "trim", "scale", "copy", "extend", "stretch", "rotate", "split", "offset"];

const BODY = "M1132 327Q1094 362 1056 402C1000 462 930 570 906 681Q899 710 899 740V1344H1364V766H1362Q1362 710 1358 681C1344 590 1262 440 1132 327Z";

const Model = () => (
  <Scene viewBox="317 274 1731 1208" preserveAspectRatio="xMidYMid slice" role="img" aria-label="Propeller sketch">
    <defs>
      <linearGradient id="shade" x1="0" x2="1" y1="0" y2="0">
        <stop offset="0" stopColor="#80654c" />
        <stop offset="0.08" stopColor="#8c7058" />
        <stop offset="0.3" stopColor="#92755d" />
        <stop offset="0.5" stopColor="#8d7158" />
        <stop offset="0.68" stopColor="#83674e" />
        <stop offset="0.9" stopColor="#6c5038" />
        <stop offset="1" stopColor="#72593e" />
      </linearGradient>
      <radialGradient id="glow" gradientUnits="userSpaceOnUse" cx="1060" cy="450" r="330">
        <stop offset="0" stopColor="#a8876a" stopOpacity="0.85" />
        <stop offset="0.6" stopColor="#a48268" stopOpacity="0.5" />
        <stop offset="1" stopColor="#9a7a62" stopOpacity="0" />
      </radialGradient>
    </defs>
    <rect x="874" y="200" width="514" height="1196" rx="2" fill="#b8ad9e" stroke="#cf8446" strokeWidth="2" />
    <path d={BODY} fill="url(#shade)" />
    <path d={BODY} fill="url(#glow)" />
    <path d="M317 1345H2048" stroke="#145c74" strokeWidth="4" />
    <path d="M1132 1345V1482" stroke="#3a7078" strokeWidth="2" />
    <path d="M1132 274V1344" stroke="#e2d8f4" strokeWidth="4" />
    <path d="M1132 226V1344" stroke="#1c0870" strokeWidth="4" strokeDasharray="34 10 10 10" />
    <path d="M772 728L707 823L1501 1360L1565 1262Z" fill="none" stroke="#780c78" strokeWidth="4" strokeLinejoin="round" />
    <path d="M423 1376H465" stroke="#a01420" strokeWidth="2" />
    <path d="M423 1376V1420" stroke="#101070" strokeWidth="2" />
    <path d="M462 1365L483 1376L462 1388Z" fill="#a80c14" />
    <path d="M411 1415H435L423 1437Z" fill="#0a0a90" />
    <circle cx="423" cy="1376" r="11" fill="#12b01e" />
    <g fontFamily="Open Sans, sans-serif" fontSize="22" textAnchor="middle">
      <text x="423" y="1382" fontSize="16" fill="#58e050">Y</text>
      <text x="496" y="1384" fill="#e0405c">X</text>
      <text x="423" y="1457" fill="#4848b8">Z</text>
    </g>
  </Scene>
);

export default function App() {
  return (
    <>
      <Global />
      <Window>
        <Header>
          <AppButton type="button" aria-label="Application menu">
            <AppMark>{icons.logo}PRO</AppMark>
            <Caret w={13} />
          </AppButton>
          <TitleBar>
            <QuickAccess>
              <Bar icon="newDoc" w={36} />
              <BarMenu w={34} />
              <Bar icon="open" w={40} />
              <Bar icon="save" w={56} />
              <Bar icon="undo" w={42} />
              <Bar icon="redo" w={54} />
              <BarDivider $gap={4} />
              <Bar icon="update" w={50} />
              <BarMenu w={20} />
              <Bar icon="select" w={52} />
              <BarMenu w={16} />
              <Bar icon="sphere" w={60} />
              <Bar icon="more" w={30} />
            </QuickAccess>
            <DocTitle>PropellerAI</DocTitle>
            <Bar icon="arrow" w={31} />
            <SearchField type="search" aria-label="Search" placeholder="Type a keyword or phrase" />
            <TitleGroup>
              <Bar icon="binoculars" w={54} />
              <Bar icon="key" w={42} />
              <Bar icon="dish" w={52} />
              <Bar icon="star" w={44} />
              <Bar icon="user" w={54} />
              <SignIn type="button">Sign In</SignIn>
            </TitleGroup>
            <Spacer />
            <TitleGroup>
              <BarMenu w={36} />
              <Bar icon="exchange" w={44} />
              <BarDivider $gap={12} />
              <Bar icon="help" w={44} />
              <BarMenu w={28} />
            </TitleGroup>
            <Glass>
              <WindowButtons>
                <WindowButton type="button" aria-label="Minimize">{icons.minimize}</WindowButton>
                <WindowButton type="button" aria-label="Restore">{icons.restore}</WindowButton>
                <WindowButton type="button" aria-label="Close" $close>{icons.close}</WindowButton>
              </WindowButtons>
            </Glass>
          </TitleBar>
          <Tabs>
            {tabs.map((t) => <Tab key={t} type="button">{t}</Tab>)}
            <Tab type="button" $active>Sketch</Tab>
            <CollapseGroup>
              <svg width="27" height="14" viewBox="0 0 27 14" aria-hidden="true">
                <rect width="27" height="14" rx="3" fill="#f0f0f0" /><path d="M8 10L13 4L19 10Z" fill="#333" />
              </svg>
              <Caret color="#f0f0f0" />
            </CollapseGroup>
          </Tabs>
        </Header>

        <Ribbon>
          <Panel label="Draw" caret>
            <BigButton type="button" $w={84}>{icons.line}Line</BigButton>
            <Column $w={189}>
              <Tool icon="circle" label="Circle" menu />
              <Tool icon="arc" label="Arc" menu />
              <Tool icon="rect" label="Rectangle" menu />
            </Column>
            <Column $w={130}><Tool icon="slot" label="Slot" menu /></Column>
            <BigButton type="button" $w={90}>{icons.spline}Spline<Caret /></BigButton>
            <Gap $w={14} />
            <Column $w={223}>
              <Tool icon="curve" label="Equation Curve" />
              <Tool icon="ellipse" label="Ellipse" />
              <Tool icon="point" label="Point" />
            </Column>
            <Column>
              <SplitRow>
                <Small icon="fillet" />
                <SmallButton type="button" aria-label="Fillet menu" $w={24}><Caret /></SmallButton>
              </SplitRow>
              <Small icon="polygon" />
              <SplitRow>
                <TextButton type="button">A</TextButton>
                <SmallButton type="button" aria-label="Text menu" $w={24}><Caret /></SmallButton>
              </SplitRow>
            </Column>
            <PanelDivider />
            <Gap $w={4} />
            <BigButton type="button" $w={154}>
              {icons.project}
              <BigLabel><span>Project<br />Geometry</span><Caret /></BigLabel>
            </BigButton>
          </Panel>
          <Panel label="Constrain" caret>
            <BigButton type="button" $w={132}>{icons.dimension}Dimension</BigButton>
            <Column><Small icon="autoDim" /><Small icon="showCon" /></Column>
            <Gap $w={23} />
            <IconGrid $cols={4}>{constraints.map((c) => <Small key={c} icon={c} />)}</IconGrid>
          </Panel>
          <Panel label="Pattern" center>
            <Column><Small icon="rectPattern" /><Small icon="circPattern" /><Small icon="mirror" /></Column>
          </Panel>
          <Panel label="Modify" center>
            <IconGrid $cols={3} $gap={3}>{modify.map((m) => <Small key={m} icon={m} />)}</IconGrid>
          </Panel>
          <Panel label="Layout" center>
            <Column><Small icon="layout1" /><Small icon="layout2" /><Small icon="layout3" /></Column>
          </Panel>
          <Panel label="Insert" center>
            <Column><Small icon="image" /><Small icon="points" /><Small icon="acad" /></Column>
          </Panel>
          <Panel label="Format" caret center gap={10}>
            <Column><Small icon="construction" /><Small icon="centerline" /></Column>
            <Column><Small icon="centerPoint" on /><Small icon="driven" /></Column>
          </Panel>
          <Panel label="Exit" center exit>
            <BigButton type="button" $w={86}>{icons.check}<span>Finish<br />Sketch</span></BigButton>
          </Panel>
          <RibbonEnd />
        </Ribbon>

        <Workspace>
          <Browser>
            <GripRow>
              <Grip />
              <BarButton type="button" aria-label="Close browser" $w={16}>
                <svg width="12" height="12" viewBox="0 0 12 12" aria-hidden="true"><path d="M1 1L11 11M11 1L1 11" stroke="#111" strokeWidth="3" /></svg>
              </BarButton>
            </GripRow>
            <BrowserHead>
              <BrowserTitle type="button">Model<Caret color="#fff" w={16} /></BrowserTitle>
              <button type="button" aria-label="Help">{icons.noteHelp}</button>
            </BrowserHead>
            <BrowserTools>
              <button type="button" aria-label="Filter">{icons.filter}</button>
              <ToolDivider />
              <button type="button" aria-label="Find">{icons.find}</button>
            </BrowserTools>
            <Tree>
              <TreeRow>{icons.part}<TreeLabel type="button">PropellerAI</TreeLabel></TreeRow>
              {nodes.map((n, i) => (
                <TreeRow key={n.label} $edit={n.icon === "sketch"}>
                  <Branch expand={n.expand} last={i === nodes.length - 1} />
                  {icons[n.icon]}
                  <TreeLabel type="button">{n.label}</TreeLabel>
                </TreeRow>
              ))}
            </Tree>
          </Browser>
          <Viewport>
            <Model />
            <DocButtons>
              <button type="button" aria-label="Minimize document">{icons.minimize}</button>
              <button type="button" aria-label="Restore document">{icons.restore}</button>
              <button type="button" aria-label="Close document">{icons.close}</button>
            </DocButtons>
            <ViewCube type="button"><CubeFace>TOP</CubeFace></ViewCube>
            <NavBar>
              <NavButton type="button" aria-label="Options" $h={16} $end>{nav.gear}</NavButton>
              <NavButton type="button" aria-label="Wheel" $h={82}>{nav.wheel}</NavButton>
              <NavButton type="button" aria-label="Wheel menu" $h={18}><Caret color={NAV} /></NavButton>
              <NavDivider />
              <NavButton type="button" aria-label="Pan" $h={56}>{nav.hand}</NavButton>
              <NavButton type="button" aria-label="Zoom" $h={44}>{nav.zoom}</NavButton>
              <NavButton type="button" aria-label="Zoom menu" $h={22}><Caret color={NAV} /></NavButton>
              <NavButton type="button" aria-label="Orbit" $h={48}>{nav.orbit}</NavButton>
              <NavButton type="button" aria-label="Orbit menu" $h={20}><Caret color={NAV} /></NavButton>
              <NavButton type="button" aria-label="Look at" $h={48}>{nav.look}</NavButton>
              <NavButton type="button" aria-label="Zoom page" $h={48}>{nav.page}</NavButton>
              <NavButton type="button" aria-label="Less" $h={40} $end>{nav.less}</NavButton>
            </NavBar>
          </Viewport>
        </Workspace>

        <StatusBar>
          <StatusCell>Ready</StatusCell>
          <StatusTools>
            <BarButton type="button" aria-label="Snap to grid" $w={48}>{icons.snap}</BarButton>
            <BarButton type="button" aria-label="Show constraints" $w={48}>{icons.inferred}</BarButton>
            <BarButton type="button" aria-label="Dimension display" $w={48}>{icons.tolerance}</BarButton>
            <BarButton type="button" aria-label="Dimension menu" $w={14}><Caret /></BarButton>
            <BarButton type="button" aria-label="Slice graphics" $w={62}>{icons.slice}</BarButton>
            <BarButton type="button" aria-label="Relax mode" $w={38}>{icons.relax}</BarButton>
          </StatusTools>
          <StatusCell>0.000 mm, 0.000 mm</StatusCell>
          <StatusCell>6 dimensions needed</StatusCell>
          <StatusCell>1</StatusCell>
          <StatusCell>1</StatusCell>
        </StatusBar>
        <Taskbar><TaskItem /><TaskItem /><TaskItem /></Taskbar>
      </Window>
    </>
  );
}
